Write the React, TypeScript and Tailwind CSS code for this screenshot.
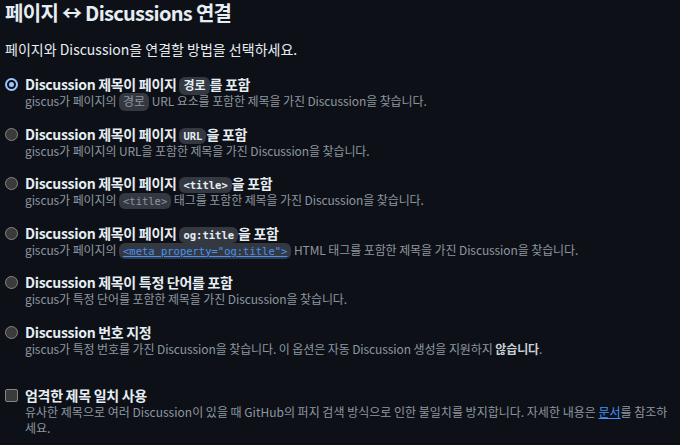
import React from "react";

const font = { fontFamily: '"Noto Sans CJK KR", sans-serif' };

function Code({ children, link, ko }: { children: React.ReactNode; link?: boolean; ko?: boolean }) {
  return (
    <code
      className={
        "rounded-md bg-[#343941] px-[4px] py-[2px] leading-none tracking-normal " +
        (ko ? "text-[12px] " : "text-[10.5px] ") +
        (link ? "text-[#4493f8] underline" : "")
      }
      style={{ fontFamily: '"DejaVu Sans Mono", "Noto Sans CJK KR", monospace' }}
    >
      {children}
    </code>
  );
}

function Radio({ checked }: { checked?: boolean }) {
  return checked ? (
    <span className="mt-[3px] flex h-[13px] w-[13px] shrink-0 items-center justify-center rounded-full bg-[#99c8ff]">
      <span className="h-[9px] w-[9px] rounded-full border-2 border-[#0d1117] bg-[#99c8ff]" />
    </span>
  ) : (
    <span className="mt-[3px] h-[13px] w-[13px] shrink-0 rounded-full border border-[#858585] bg-[#3b3b3b]" />
  );
}

function Option({
  checked,
  title,
  desc,
}: {
  checked?: boolean;
  title: React.ReactNode;
  desc: React.ReactNode;
}) {
  return (
    <div className="flex gap-[7px]">
      <Radio checked={checked} />
      <div>
        <div className="text-[14px] font-bold leading-[18px] tracking-[-0.3px] text-[#e6edf3]">{title}</div>
        <div className="text-[12px] leading-[16px] tracking-[-0.1px] text-[#8d96a0]">{desc}</div>
      </div>
    </div>
  );
}

export default function App() {
  return (
    <div className="min-h-[445px] bg-[#0d1117] px-[5px] text-[#e6edf3]" style={font}>
      <h3 className="pt-[1px] text-[20px] font-bold leading-[24px] tracking-[-0.7px]">페이지 ↔ Discussions 연결</h3>
      <p className="mt-[14px] text-[14px] leading-[20px]">페이지와 Discussion을 연결할 방법을 선택하세요.</p>
      <div className="mt-[16px] flex flex-col gap-[15.6px]">
        <Option
          checked
          title={
            <>
              Discussion 제목이 페이지 <Code ko>경로</Code>를 포함
            </>
          }
          desc={
            <>
              giscus가 페이지의 <Code ko>경로</Code> URL 요소를 포함한 제목을 가진 Discussion을 찾습니다.
            </>
          }
        />
        <Option
          title={
            <>
              Discussion 제목이 페이지 <Code>URL</Code>을 포함
            </>
          }
          desc={<>giscus가 페이지의 URL을 포함한 제목을 가진 Discussion을 찾습니다.</>}
        />
        <Option
          title={
            <>
              Discussion 제목이 페이지 <Code>&lt;title&gt;</Code>을 포함
            </>
          }
          desc={
            <>
              giscus가 페이지의 <Code>&lt;title&gt;</Code> 태그를 포함한 제목을 가진 Discussion을 찾습니다.
            </>
          }
        />
        <Option
          title={
            <>
              Discussion 제목이 페이지 <Code>og:title</Code>을 포함
            </>
          }
          desc={
            <>
              giscus가 페이지의 <Code link>&lt;meta property="og:title"&gt;</Code> HTML 태그를 포함한 제목을 가진
              Discussion을 찾습니다.
            </>
          }
        />
        <Option
          title={<>Discussion 제목이 특정 단어를 포함</>}
          desc={<>giscus가 특정 단어를 포함한 제목을 가진 Discussion을 찾습니다.</>}
        />
        <Option
          title={<>Discussion 번호 지정</>}
          desc={
            <>
              giscus가 특정 번호를 가진 Discussion을 찾습니다. 이 옵션은 자동 Discussion 생성을 지원하지{" "}
              <strong className="text-[#c9d1d9]">않습니다</strong>.
            </>
          }
        />
      </div>
      <div className="mt-[29px] flex gap-[7px]">
        <span className="mt-[3px] h-[13px] w-[13px] shrink-0 rounded-[2px] border border-[#858585] bg-[#3b3b3b]" />
        <div>
          <div className="text-[14px] font-bold leading-[18px] tracking-[-0.3px]">엄격한 제목 일치 사용</div>
          <div className="text-[12px] leading-[16px] text-[#8d96a0]">
            유사한 제목으로 여러 Discussion이 있을 때 GitHub의 퍼지 검색 방식으로 인한 불일치를 방지합니다. 자세한 내용은{" "}
            <a className="text-[#4493f8] underline">문서</a>를 참조하세요.
          </div>
        </div>
      </div>
    </div>
  );
}
